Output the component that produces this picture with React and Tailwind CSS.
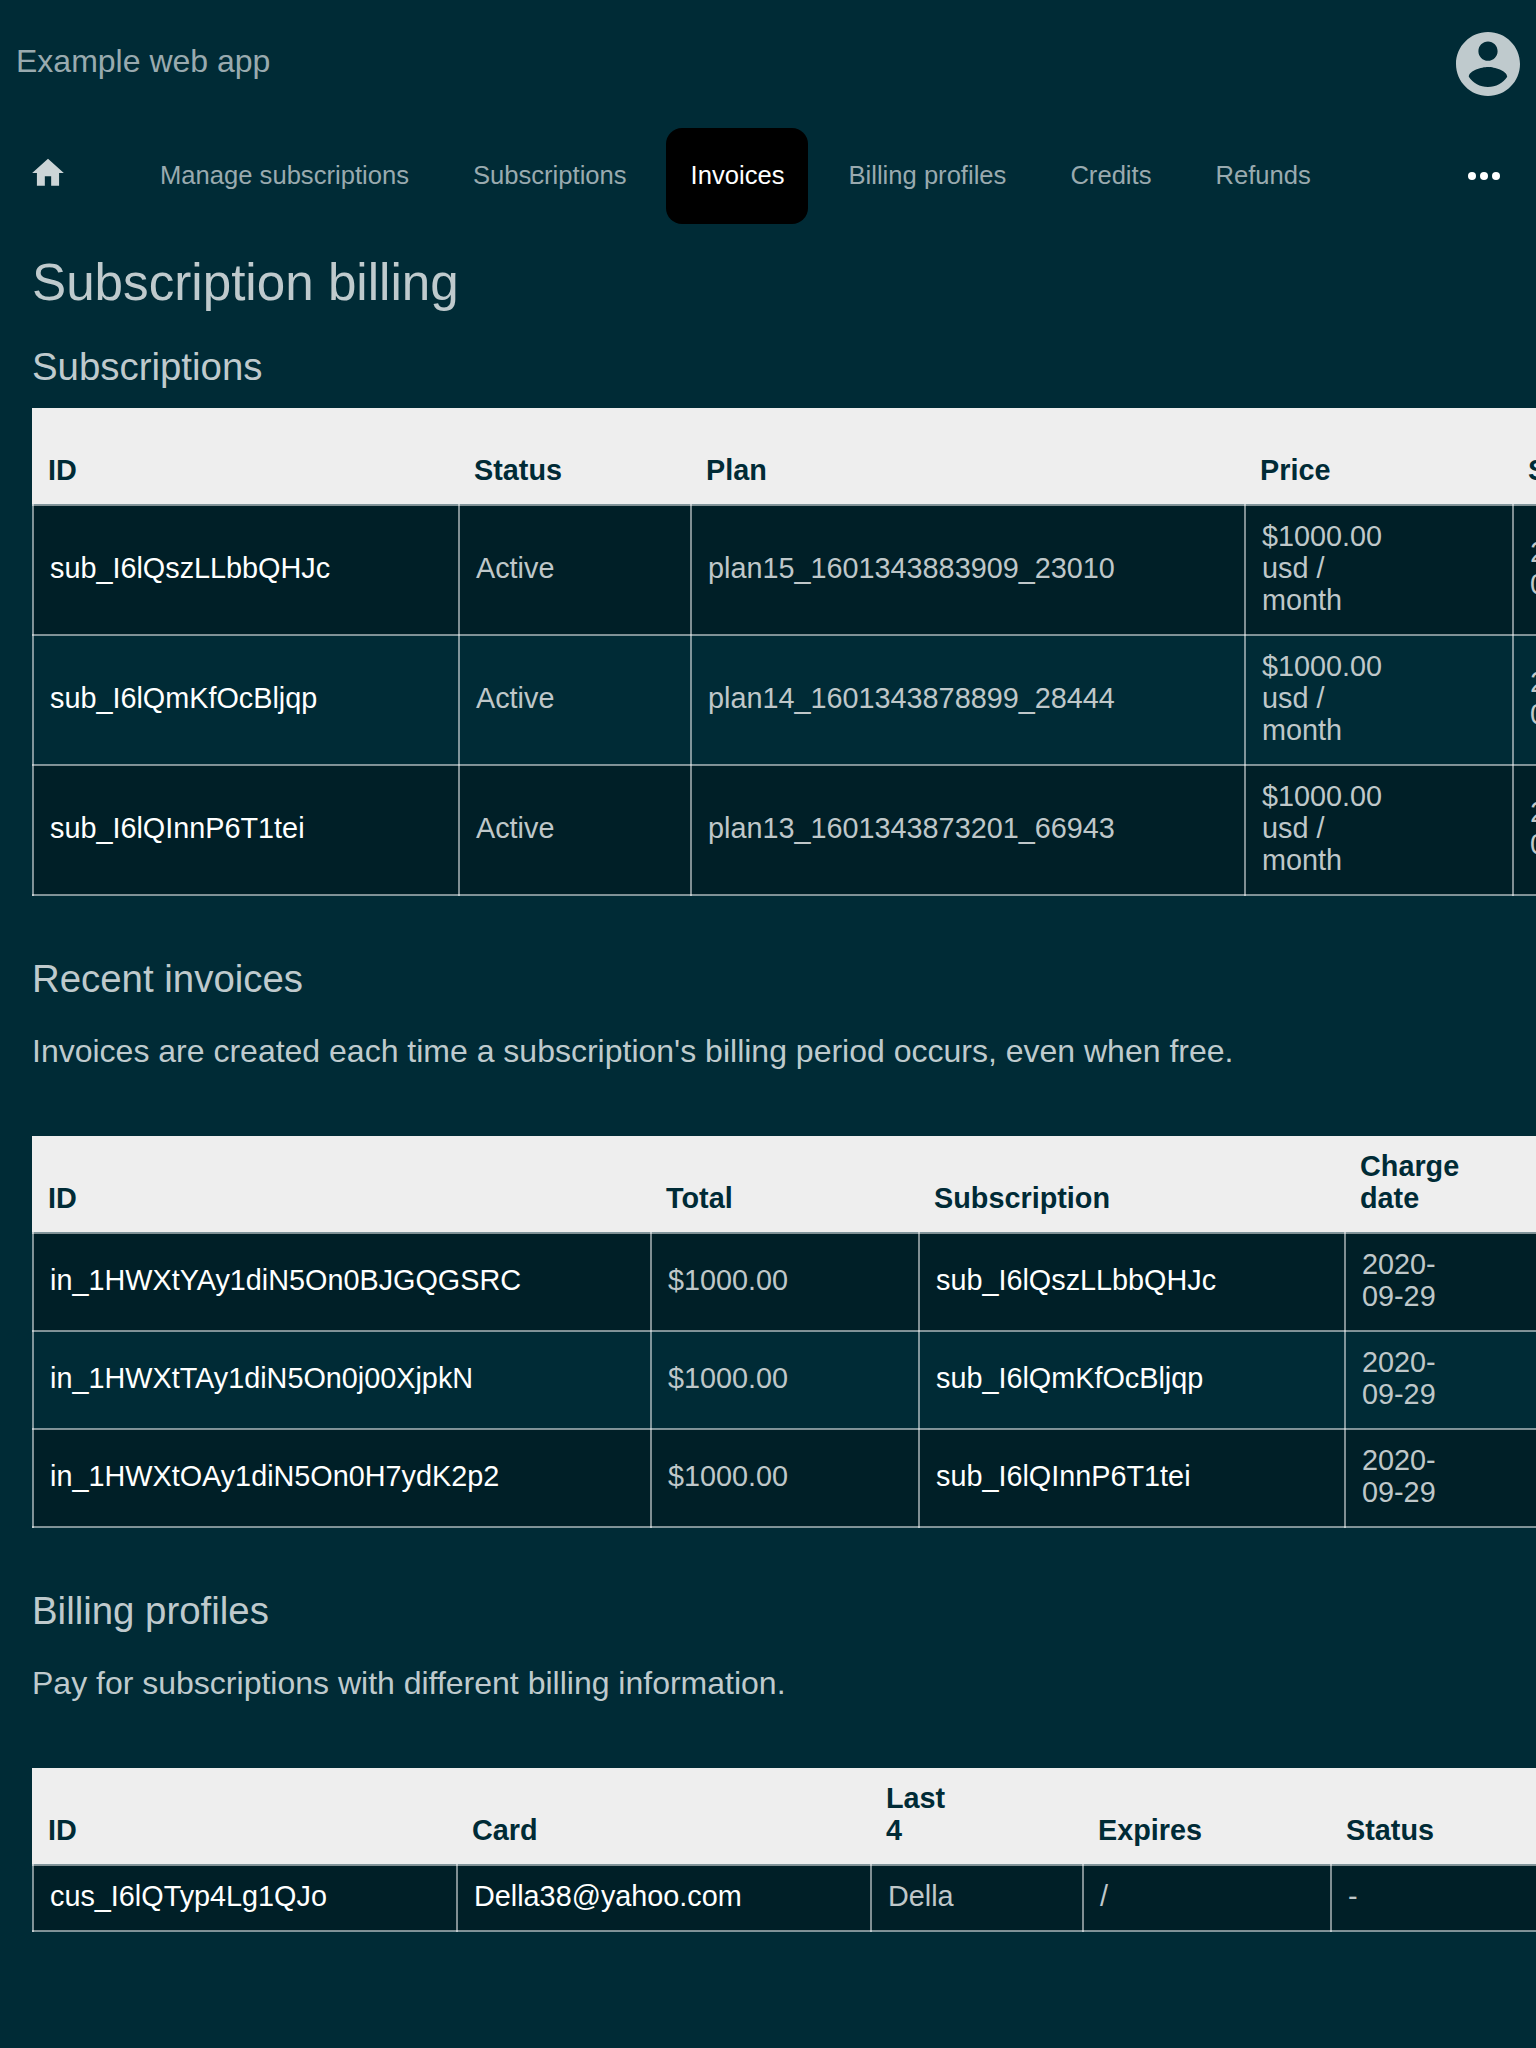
import React from "react";

const muted = "text-[#99aaaf]";

const tables = {
  subscriptions: {
    widths: [426, 232, 554, 268, 268],
    heads: ["ID", "Status", "Plan", "Price", "Subscription start"],
    rows: [
      ["sub_I6lQszLLbbQHJc", "Active", "plan15_1601343883909_23010", "$1000.00\nusd /\nmonth", "2020-\n09-29"],
      ["sub_I6lQmKfOcBljqp", "Active", "plan14_1601343878899_28444", "$1000.00\nusd /\nmonth", "2020-\n09-29"],
      ["sub_I6lQInnP6T1tei", "Active", "plan13_1601343873201_66943", "$1000.00\nusd /\nmonth", "2020-\n09-29"],
    ],
    links: [0],
  },
  invoices: {
    widths: [618, 268, 426, 268],
    heads: ["ID", "Total", "Subscription", "Charge\ndate"],
    rows: [
      ["in_1HWXtYAy1diN5On0BJGQGSRC", "$1000.00", "sub_I6lQszLLbbQHJc", "2020-\n09-29"],
      ["in_1HWXtTAy1diN5On0j00XjpkN", "$1000.00", "sub_I6lQmKfOcBljqp", "2020-\n09-29"],
      ["in_1HWXtOAy1diN5On0H7ydK2p2", "$1000.00", "sub_I6lQInnP6T1tei", "2020-\n09-29"],
    ],
    links: [0, 2],
  },
  profiles: {
    widths: [424, 414, 212, 248, 268],
    heads: ["ID", "Card", "Last\n4", "Expires", "Status"],
    rows: [["cus_I6lQTyp4Lg1QJo", "Della38@yahoo.com", "Della", "/", "-"]],
    links: [0, 1],
  },
};

function DataTable({ table, className }) {
  const total = table.widths.reduce((sum, w) => sum + w, 0);
  return (
    <table
      className={`table-fixed border-collapse text-[28.8px] leading-8 ${className}`}
      style={{ width: total + 2 }}
    >
      <colgroup>
        {table.widths.map((w, i) => (
          <col key={i} style={{ width: w }} />
        ))}
      </colgroup>
      <thead>
        <tr className="h-[97px] text-left align-bottom text-[#002b36]">
          {table.heads.map((head, i) => (
            <th
              key={i}
              className="relative whitespace-pre bg-[#eeeeee] bg-clip-padding pb-[18px] pl-[15px] pr-4 pt-[14px] align-bottom font-bold"
            >
              {i === 0 && <span className="absolute -left-px bottom-0 top-0 w-px bg-[#eeeeee]" />}
              {head}
            </th>
          ))}
        </tr>
      </thead>
      <tbody>
        {table.rows.map((row) => (
          <tr key={row[0]} className="odd:bg-[#001f27]">
            {row.map((cell, i) => (
              <td
                key={i}
                className={`whitespace-pre border-2 border-white/50 px-4 pb-[18px] pt-[14px] align-middle ${
                  table.links.includes(i) ? "text-white" : "text-[#bfc7c9]"
                }`}
              >
                {cell}
              </td>
            ))}
          </tr>
        ))}
      </tbody>
    </table>
  );
}

const navItems = ["Manage subscriptions", "Subscriptions", "Invoices", "Billing profiles", "Credits", "Refunds"];

export default function App() {
  return (
    <div className="h-[2048px] w-[1536px] overflow-hidden bg-[#002b36] font-['Liberation_Sans',Arial,sans-serif] text-[#bfcacd]">
      <header className="flex h-32 items-start justify-between pl-4">
        <span className={`pt-[43px] text-[32px] leading-9 ${muted}`}>Example web app</span>
        <svg viewBox="2 2 20 20" className="mr-4 mt-8 size-16" fill="#bfcacd">
          <path d="M12 2C6.48 2 2 6.48 2 12s4.48 10 10 10 10-4.48 10-10S17.52 2 12 2zm0 3c1.66 0 3 1.34 3 3s-1.34 3-3 3-3-1.34-3-3 1.34-3 3-3zm0 14.2c-2.5 0-4.71-1.28-6-3.22.03-1.99 4-3.08 6-3.08 1.99 0 5.97 1.09 6 3.08-1.29 1.94-3.5 3.22-6 3.22z" />
        </svg>
      </header>

      <nav className="flex h-24 items-center">
        <svg viewBox="0 0 24 24" className="-mt-[6px] ml-[29px] mr-[69px] size-[38px] shrink-0" fill="#ccd5d7">
          <path d="M10 20v-6h4v6h5v-8h3L12 3 2 12h3v8z" />
        </svg>
        <ul className="flex gap-4 text-[25.6px] leading-7">
          {navItems.map((item) => (
            <li
              key={item}
              className={`flex h-24 items-center pb-0.5 ${
                item === "Invoices"
                  ? "-ml-[0.4px] mr-[0.3px] rounded-2xl bg-black pl-[24.4px] pr-[23.7px] text-white"
                  : `px-6 ${muted}`
              }`}
            >
              {item}
            </li>
          ))}
        </ul>
        <svg viewBox="0 0 32 8" className="ml-auto mr-9 h-2 w-8" fill="#ffffff">
          <circle cx="4" cy="4" r="4" />
          <circle cx="16" cy="4" r="4" />
          <circle cx="28" cy="4" r="4" />
        </svg>
      </nav>

      <main className="pl-8">
        <h1 className="pt-[30px] text-[51.2px] leading-[58px]">Subscription billing</h1>
        <h2 className="pt-[33px] text-[38.4px] leading-[44px]">Subscriptions</h2>
        <DataTable table={tables.subscriptions} className="mt-[19px]" />

        <h2 className="pt-[61px] text-[38.4px] leading-[44px]">Recent invoices</h2>
        <p className="pt-[32px] text-[32px] leading-9">
          Invoices are created each time a subscription's billing period occurs, even when free.
        </p>
        <DataTable table={tables.invoices} className="mt-[67px]" />

        <h2 className="pt-[61px] text-[38.4px] leading-[44px]">Billing profiles</h2>
        <p className="pt-[32px] text-[32px] leading-9">Pay for subscriptions with different billing information.</p>
        <DataTable table={tables.profiles} className="mt-[67px]" />
      </main>
    </div>
  );
}
